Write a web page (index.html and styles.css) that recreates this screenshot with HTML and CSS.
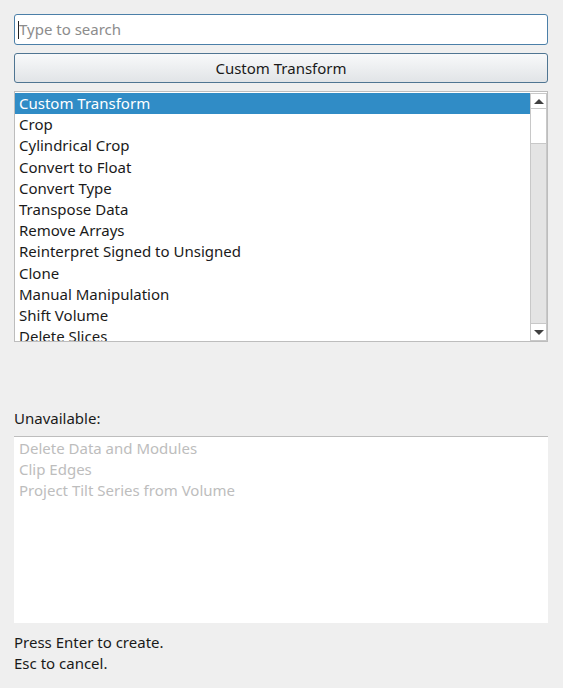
FILE: index.html
```html
<!DOCTYPE html>
<html>
<head>
<meta charset="utf-8">
<link rel="stylesheet" href="styles.css">
</head>
<body>
<div class="dialog">
  <div class="search"><span class="caret"></span><span class="placeholder">Type to search</span></div>
  <div class="button">Custom Transform</div>
  <div class="listbox">
    <div class="items">
      <div class="item selected">Custom Transform</div>
      <div class="item">Crop</div>
      <div class="item">Cylindrical Crop</div>
      <div class="item">Convert to Float</div>
      <div class="item">Convert Type</div>
      <div class="item">Transpose Data</div>
      <div class="item">Remove Arrays</div>
      <div class="item">Reinterpret Signed to Unsigned</div>
      <div class="item">Clone</div>
      <div class="item">Manual Manipulation</div>
      <div class="item">Shift Volume</div>
      <div class="item">Delete Slices</div>
    </div>
    <div class="scrollbar">
      <div class="sb-btn"><span class="arrow up"></span></div>
      <div class="sb-track"><div class="sb-thumb"></div></div>
      <div class="sb-btn"><span class="arrow down"></span></div>
    </div>
  </div>
  <div class="label">Unavailable:</div>
  <div class="unavail">
    <div class="item disabled">Delete Data and Modules</div>
    <div class="item disabled">Clip Edges</div>
    <div class="item disabled">Project Tilt Series from Volume</div>
  </div>
  <div class="hint">Press Enter to create.<br>Esc to cancel.</div>
</div>
</body>
</html>
```

FILE: styles.css
```css
html, body {
  margin: 0;
  padding: 0;
  background: #efefef;
}
body {
  font-family: "Noto Sans", "Open Sans", sans-serif;
  font-size: 15px;
  color: #1a1a1a;
}
.dialog {
  width: 534px;
  padding: 14px 0 0 14px;
  display: flex;
  flex-direction: column;
}
.search {
  height: 29px;
  border: 1px solid #4b7fa8;
  border-radius: 3px;
  background: #fff;
  display: flex;
  align-items: center;
  padding-left: 3px;
}
.caret {
  width: 1px;
  height: 18px;
  background: #222;
}
.placeholder {
  color: #8c8c8c;
  margin-top: -1px;
}
.button {
  margin-top: 8px;
  height: 28px;
  border: 1px solid #4f7592;
  border-radius: 3px;
  background: linear-gradient(#f8f9fa, #e1e4e7);
  display: flex;
  align-items: center;
  justify-content: center;
  color: #1a1a1a;
}
.listbox {
  margin-top: 8px;
  height: 249px;
  border: 1px solid #bdbdbd;
  background: #fff;
  display: flex;
  overflow: hidden;
}
.items {
  flex: 1;
  padding-top: 1px;
  overflow: hidden;
}
.item {
  line-height: 21.2px;
  height: 21.2px;
  padding-left: 4px;
  white-space: nowrap;
}
.item.selected {
  background: #308cc6;
  color: #fff;
}
.item.disabled {
  color: #bdbdbd;
  padding-left: 5px;
}
.scrollbar {
  width: 17px;
  display: flex;
  flex-direction: column;
  padding-top: 1px;
}
.sb-btn {
  height: 16px;
  background: #fff;
  border: 1px solid #c8c8c8;
  box-sizing: border-box;
  display: flex;
  align-items: center;
  justify-content: center;
  flex: none;
}
.sb-btn:last-child {
  height: 18px;
}
.sb-track {
  flex: 1;
  background: #e4e4e4;
  border-left: 1px solid #c8c8c8;
  border-right: 1px solid #c8c8c8;
}
.sb-thumb {
  height: 35px;
  background: #fff;
  border-bottom: 1px solid #c8c8c8;
  box-sizing: border-box;
}
.arrow {
  width: 0;
  height: 0;
  border-left: 5px solid transparent;
  border-right: 5px solid transparent;
}
.arrow.up {
  border-bottom: 5px solid #404040;
}
.arrow.down {
  border-top: 5px solid #404040;
}
.label {
  margin-top: 66px;
  line-height: 21px;
  height: 21px;
}
.unavail {
  margin-top: 7px;
  height: 185px;
  border-top: 1px solid #bdbdbd;
  background: #fff;
  padding-top: 1px;
}
.hint {
  margin-top: 9px;
  line-height: 21.2px;
}
```
